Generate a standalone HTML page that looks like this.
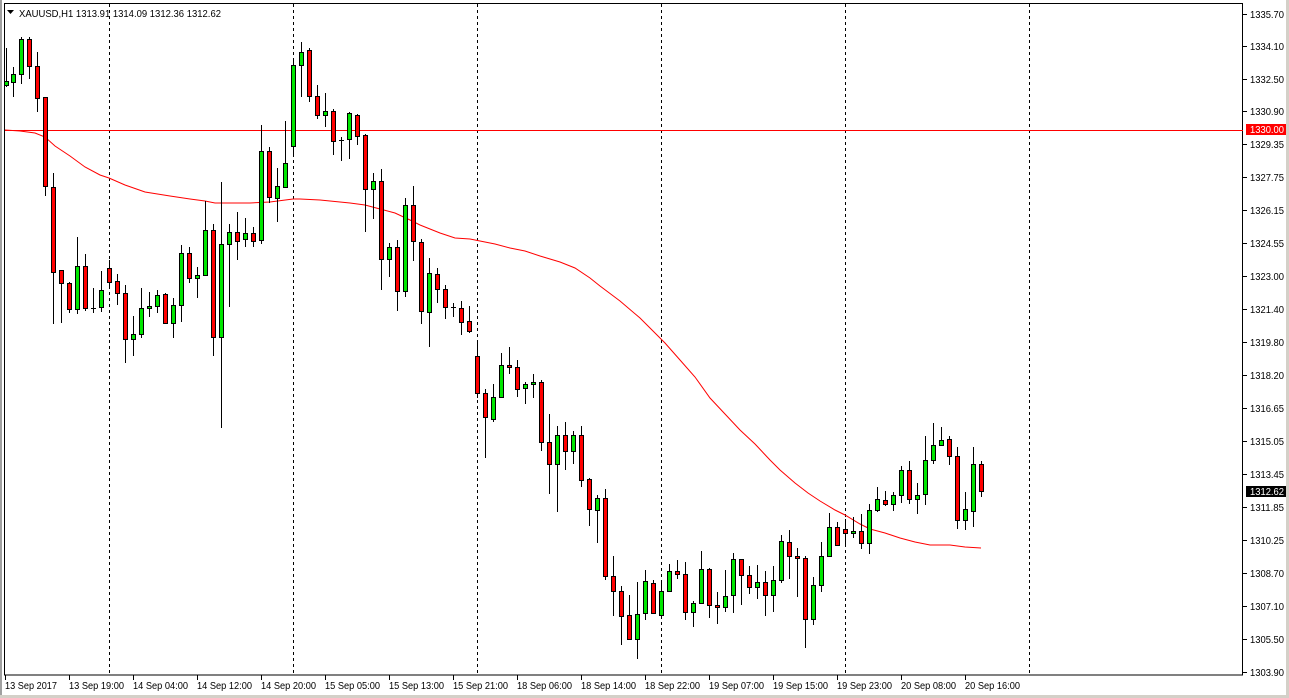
<!DOCTYPE html>
<html><head><meta charset="utf-8"><style>
html,body{margin:0;padding:0;background:#fff;}
body{width:1289px;height:698px;overflow:hidden;position:relative;font-family:"Liberation Sans",sans-serif;}
svg{position:absolute;left:0;top:0;}
.t{font-family:"Liberation Sans",sans-serif;font-size:10.5px;fill:#000;}
</style></head><body>
<svg width="1289" height="698" viewBox="0 0 1289 698" shape-rendering="crispEdges">
<rect x="0" y="0" width="1289" height="698" fill="#fff"/>
<rect x="0" y="0" width="2" height="698" fill="#a0a0a0"/>
<rect x="1286" y="0" width="3" height="698" fill="#d4d0c8"/>
<rect x="0" y="695" width="1289" height="3" fill="#d4d0c8"/>
<rect x="4.5" y="3.5" width="1238" height="671.5" fill="none" stroke="#000"/>
<g stroke="#000" stroke-dasharray="3,3">
<path d="M109.5 4V675M293.5 4V675M477.5 4V675M661.5 4V675M845.5 4V675M1029.5 4V675"/>
</g>
<path d="M5 130.5H1243" stroke="#ff0000"/>
<polyline shape-rendering="auto" fill="none" stroke="#ff0000" stroke-width="1" points="5,130 20,131 35,133 45,137 55,146 70,156 85,167 100,175 109,178 125,185 145,192 170,196 190,199 205,201 215,203 250,203 270,202 293,199 300,199 320,200 350,203 365,205 380,209 395,213 410,220 420,225 440,233 455,238 470,239 480,241 495,244 510,248 525,251 540,256 560,262 575,268 590,278 600,286 620,301 640,318 655,333 665,343 680,360 695,377 710,398 725,414 740,430 755,444 770,460 780,470 795,483 808,493 820,501 835,510 845,515 860,524 870,529 885,533 900,538 915,542 930,545 950,545 965,547 981,548"/>
<path stroke="#000" d="M6.5 48V87M13.5 67V97M21.5 37V84M29.5 37V79M37.5 52V112M45.5 97V196M53.5 173V324M61.5 270V323M69.5 282V313M77.5 237V314M85.5 254V311M93.5 288V313M101.5 271V312M109.5 260V288M117.5 274V305M125.5 285V363M133.5 316V356M141.5 288V338M149.5 292V317M157.5 290V313M165.5 293V324M173.5 298V338M181.5 245V322M189.5 247V283M197.5 267V298M205.5 201V275M213.5 224V356M221.5 182V428M229.5 224V307M237.5 212V260M245.5 218V247M253.5 227V247M261.5 125V244M269.5 147V203M277.5 168V222M285.5 121V187M293.5 58V157M301.5 42V97M309.5 48V102M317.5 85V119M325.5 93V127M333.5 109V155M341.5 137V161M349.5 112V159M357.5 114V145M365.5 134V232M373.5 173V219M381.5 169V290M389.5 243V277M397.5 240V311M405.5 198V297M413.5 186V261M421.5 239V324M429.5 258V347M437.5 268V303M445.5 285V319M453.5 303V317M461.5 301V335M469.5 306V333M477.5 340V398M485.5 389V458M493.5 384V422M501.5 353V398M509.5 347V374M517.5 360V397M525.5 382V404M533.5 374V398M541.5 380V451M549.5 414V494M557.5 426V512M565.5 422V470M573.5 431V464M581.5 426V487M589.5 478V526M597.5 495V543M605.5 489V580M613.5 556V616M621.5 586V645M629.5 595V639M637.5 582V659M645.5 570V620M653.5 580V613M661.5 580V617M669.5 564V591M677.5 560V579M685.5 562V620M693.5 601V627M701.5 551V604M709.5 568V618M717.5 592V624M725.5 570V612M733.5 553V613M741.5 559V605M749.5 566V594M757.5 565V599M765.5 571V616M773.5 566V612M781.5 535V583M789.5 530V579M797.5 548V597M805.5 556V648M813.5 577V625M821.5 542V592M829.5 513V556M837.5 522V545M845.5 519V546M853.5 517V538M861.5 514V549M869.5 504V554M877.5 487V512M885.5 491V506M893.5 492V511M901.5 466V503M909.5 461V504M917.5 483V514M925.5 436V505M933.5 423V464M941.5 427V445M949.5 436V465M957.5 447V529M965.5 492V530M973.5 447V527M981.5 461V497"/>
<g stroke="#000" stroke-width="1">
<g fill="#00e600">
<rect x="4.5" y="81.5" width="4" height="4"/>
<rect x="11.5" y="74.5" width="4" height="8"/>
<rect x="19.5" y="39.5" width="4" height="35"/>
<rect x="75.5" y="266.5" width="4" height="43"/>
<rect x="99.5" y="290.5" width="4" height="17"/>
<rect x="131.5" y="334.5" width="4" height="5"/>
<rect x="139.5" y="308.5" width="4" height="26"/>
<rect x="147.5" y="306.5" width="4" height="2"/>
<rect x="155.5" y="295.5" width="4" height="11"/>
<rect x="171.5" y="305.5" width="4" height="18"/>
<rect x="179.5" y="253.5" width="4" height="52"/>
<rect x="195.5" y="275.5" width="4" height="3"/>
<rect x="203.5" y="230.5" width="4" height="45"/>
<rect x="219.5" y="244.5" width="4" height="93"/>
<rect x="227.5" y="232.5" width="4" height="12"/>
<rect x="243.5" y="233.5" width="4" height="6"/>
<rect x="259.5" y="151.5" width="4" height="89"/>
<rect x="275.5" y="186.5" width="4" height="12"/>
<rect x="283.5" y="163.5" width="4" height="24"/>
<rect x="291.5" y="65.5" width="4" height="81"/>
<rect x="299.5" y="52.5" width="4" height="13"/>
<rect x="323.5" y="111.5" width="4" height="4"/>
<rect x="347.5" y="113.5" width="4" height="26"/>
<rect x="371.5" y="181.5" width="4" height="8"/>
<rect x="387.5" y="247.5" width="4" height="12"/>
<rect x="403.5" y="205.5" width="4" height="86"/>
<rect x="427.5" y="273.5" width="4" height="39"/>
<rect x="491.5" y="397.5" width="4" height="22"/>
<rect x="499.5" y="365.5" width="4" height="32"/>
<rect x="523.5" y="384.5" width="4" height="4"/>
<rect x="531.5" y="382.5" width="4" height="2"/>
<rect x="555.5" y="435.5" width="4" height="29"/>
<rect x="571.5" y="435.5" width="4" height="16"/>
<rect x="595.5" y="498.5" width="4" height="12"/>
<rect x="635.5" y="614.5" width="4" height="25"/>
<rect x="643.5" y="581.5" width="4" height="32"/>
<rect x="659.5" y="591.5" width="4" height="24"/>
<rect x="667.5" y="571.5" width="4" height="20"/>
<rect x="691.5" y="603.5" width="4" height="9"/>
<rect x="699.5" y="569.5" width="4" height="34"/>
<rect x="723.5" y="596.5" width="4" height="11"/>
<rect x="731.5" y="559.5" width="4" height="36"/>
<rect x="755.5" y="582.5" width="4" height="5"/>
<rect x="771.5" y="580.5" width="4" height="15"/>
<rect x="779.5" y="541.5" width="4" height="39"/>
<rect x="811.5" y="585.5" width="4" height="34"/>
<rect x="819.5" y="556.5" width="4" height="29"/>
<rect x="827.5" y="527.5" width="4" height="29"/>
<rect x="851.5" y="531.5" width="4" height="2"/>
<rect x="867.5" y="510.5" width="4" height="33"/>
<rect x="875.5" y="499.5" width="4" height="11"/>
<rect x="891.5" y="495.5" width="4" height="9"/>
<rect x="899.5" y="470.5" width="4" height="25"/>
<rect x="915.5" y="495.5" width="4" height="4"/>
<rect x="923.5" y="460.5" width="4" height="34"/>
<rect x="931.5" y="445.5" width="4" height="15"/>
<rect x="939.5" y="440.5" width="4" height="5"/>
<rect x="963.5" y="509.5" width="4" height="11"/>
<rect x="971.5" y="464.5" width="4" height="47"/>
</g>
<g fill="#ff0000">
<rect x="27.5" y="39.5" width="4" height="27"/>
<rect x="35.5" y="66.5" width="4" height="32"/>
<rect x="43.5" y="97.5" width="4" height="89"/>
<rect x="51.5" y="187.5" width="4" height="85"/>
<rect x="59.5" y="270.5" width="4" height="13"/>
<rect x="67.5" y="283.5" width="4" height="26"/>
<rect x="83.5" y="266.5" width="4" height="42"/>
<rect x="107.5" y="268.5" width="4" height="14"/>
<rect x="115.5" y="281.5" width="4" height="12"/>
<rect x="123.5" y="293.5" width="4" height="46"/>
<rect x="163.5" y="294.5" width="4" height="29"/>
<rect x="187.5" y="253.5" width="4" height="25"/>
<rect x="211.5" y="230.5" width="4" height="107"/>
<rect x="235.5" y="232.5" width="4" height="9"/>
<rect x="251.5" y="233.5" width="4" height="8"/>
<rect x="267.5" y="151.5" width="4" height="46"/>
<rect x="307.5" y="50.5" width="4" height="46"/>
<rect x="315.5" y="96.5" width="4" height="19"/>
<rect x="331.5" y="111.5" width="4" height="30"/>
<rect x="355.5" y="115.5" width="4" height="21"/>
<rect x="363.5" y="135.5" width="4" height="54"/>
<rect x="379.5" y="181.5" width="4" height="78"/>
<rect x="395.5" y="247.5" width="4" height="44"/>
<rect x="411.5" y="205.5" width="4" height="36"/>
<rect x="419.5" y="242.5" width="4" height="69"/>
<rect x="435.5" y="274.5" width="4" height="15"/>
<rect x="443.5" y="289.5" width="4" height="18"/>
<rect x="459.5" y="308.5" width="4" height="14"/>
<rect x="467.5" y="321.5" width="4" height="10"/>
<rect x="475.5" y="356.5" width="4" height="37"/>
<rect x="483.5" y="393.5" width="4" height="24"/>
<rect x="507.5" y="365.5" width="4" height="2"/>
<rect x="515.5" y="367.5" width="4" height="22"/>
<rect x="539.5" y="382.5" width="4" height="60"/>
<rect x="547.5" y="442.5" width="4" height="22"/>
<rect x="563.5" y="435.5" width="4" height="16"/>
<rect x="579.5" y="435.5" width="4" height="45"/>
<rect x="587.5" y="479.5" width="4" height="30"/>
<rect x="603.5" y="498.5" width="4" height="78"/>
<rect x="611.5" y="576.5" width="4" height="15"/>
<rect x="619.5" y="591.5" width="4" height="25"/>
<rect x="627.5" y="615.5" width="4" height="24"/>
<rect x="651.5" y="583.5" width="4" height="30"/>
<rect x="675.5" y="571.5" width="4" height="3"/>
<rect x="683.5" y="574.5" width="4" height="38"/>
<rect x="707.5" y="569.5" width="4" height="36"/>
<rect x="715.5" y="605.5" width="4" height="2"/>
<rect x="739.5" y="559.5" width="4" height="16"/>
<rect x="747.5" y="575.5" width="4" height="12"/>
<rect x="763.5" y="582.5" width="4" height="13"/>
<rect x="787.5" y="542.5" width="4" height="14"/>
<rect x="795.5" y="556.5" width="4" height="2"/>
<rect x="803.5" y="558.5" width="4" height="61"/>
<rect x="835.5" y="527.5" width="4" height="18"/>
<rect x="843.5" y="529.5" width="4" height="4"/>
<rect x="859.5" y="531.5" width="4" height="12"/>
<rect x="883.5" y="500.5" width="4" height="4"/>
<rect x="907.5" y="470.5" width="4" height="29"/>
<rect x="947.5" y="439.5" width="4" height="17"/>
<rect x="955.5" y="456.5" width="4" height="64"/>
<rect x="979.5" y="464.5" width="4" height="27"/>
</g>
</g>
<path stroke="#000" d="M91 308.5H96M339 140.5H344M451 307.5H456"/>
<path d="M7 10H14L10.5 14Z" fill="#000" shape-rendering="auto"/>
<text class="t" x="19" y="17" textLength="202" lengthAdjust="spacingAndGlyphs">XAUUSD,H1  1313.91 1314.09 1312.36 1312.62</text>
<path stroke="#000" d="M1243 14.5H1247M1243 46.5H1247M1243 79.5H1247M1243 111.5H1247M1243 144.5H1247M1243 177.5H1247M1243 210.5H1247M1243 243.5H1247M1243 276.5H1247M1243 309.5H1247M1243 342.5H1247M1243 375.5H1247M1243 408.5H1247M1243 441.5H1247M1243 474.5H1247M1243 507.5H1247M1243 540.5H1247M1243 573.5H1247M1243 606.5H1247M1243 639.5H1247M1243 672.5H1247"/>
<g>
<text class="t" x="1250" y="18" textLength="34" lengthAdjust="spacingAndGlyphs">1335.70</text>
<text class="t" x="1250" y="50" textLength="34" lengthAdjust="spacingAndGlyphs">1334.10</text>
<text class="t" x="1250" y="83" textLength="34" lengthAdjust="spacingAndGlyphs">1332.50</text>
<text class="t" x="1250" y="115" textLength="34" lengthAdjust="spacingAndGlyphs">1330.90</text>
<text class="t" x="1250" y="148" textLength="34" lengthAdjust="spacingAndGlyphs">1329.35</text>
<text class="t" x="1250" y="181" textLength="34" lengthAdjust="spacingAndGlyphs">1327.75</text>
<text class="t" x="1250" y="214" textLength="34" lengthAdjust="spacingAndGlyphs">1326.15</text>
<text class="t" x="1250" y="247" textLength="34" lengthAdjust="spacingAndGlyphs">1324.55</text>
<text class="t" x="1250" y="280" textLength="34" lengthAdjust="spacingAndGlyphs">1323.00</text>
<text class="t" x="1250" y="313" textLength="34" lengthAdjust="spacingAndGlyphs">1321.40</text>
<text class="t" x="1250" y="346" textLength="34" lengthAdjust="spacingAndGlyphs">1319.80</text>
<text class="t" x="1250" y="379" textLength="34" lengthAdjust="spacingAndGlyphs">1318.20</text>
<text class="t" x="1250" y="412" textLength="34" lengthAdjust="spacingAndGlyphs">1316.65</text>
<text class="t" x="1250" y="445" textLength="34" lengthAdjust="spacingAndGlyphs">1315.05</text>
<text class="t" x="1250" y="478" textLength="34" lengthAdjust="spacingAndGlyphs">1313.45</text>
<text class="t" x="1250" y="511" textLength="34" lengthAdjust="spacingAndGlyphs">1311.85</text>
<text class="t" x="1250" y="544" textLength="34" lengthAdjust="spacingAndGlyphs">1310.25</text>
<text class="t" x="1250" y="577" textLength="34" lengthAdjust="spacingAndGlyphs">1308.70</text>
<text class="t" x="1250" y="610" textLength="34" lengthAdjust="spacingAndGlyphs">1307.10</text>
<text class="t" x="1250" y="643" textLength="34" lengthAdjust="spacingAndGlyphs">1305.50</text>
<text class="t" x="1250" y="676" textLength="34" lengthAdjust="spacingAndGlyphs">1303.90</text>
</g>
<rect x="1246" y="124" width="40" height="11" fill="#ff0000"/>
<text x="1250" y="133" textLength="34" lengthAdjust="spacingAndGlyphs" style="font-family:'Liberation Sans',sans-serif;font-size:10.5px;fill:#fff">1330.00</text>
<rect x="1246" y="486" width="40" height="11" fill="#000"/>
<text x="1250" y="495" textLength="34" lengthAdjust="spacingAndGlyphs" style="font-family:'Liberation Sans',sans-serif;font-size:10.5px;fill:#fff">1312.62</text>
<path stroke="#000" d="M5.5 675V680M69.5 675V680M133.5 675V680M197.5 675V680M261.5 675V680M325.5 675V680M389.5 675V680M453.5 675V680M517.5 675V680M581.5 675V680M645.5 675V680M709.5 675V680M773.5 675V680M837.5 675V680M901.5 675V680M965.5 675V680"/>
<g>
<text class="t" x="5" y="689" textLength="52" lengthAdjust="spacingAndGlyphs">13 Sep 2017</text>
<text class="t" x="69" y="689" textLength="55" lengthAdjust="spacingAndGlyphs">13 Sep 19:00</text>
<text class="t" x="133" y="689" textLength="55" lengthAdjust="spacingAndGlyphs">14 Sep 04:00</text>
<text class="t" x="197" y="689" textLength="55" lengthAdjust="spacingAndGlyphs">14 Sep 12:00</text>
<text class="t" x="261" y="689" textLength="55" lengthAdjust="spacingAndGlyphs">14 Sep 20:00</text>
<text class="t" x="325" y="689" textLength="55" lengthAdjust="spacingAndGlyphs">15 Sep 05:00</text>
<text class="t" x="389" y="689" textLength="55" lengthAdjust="spacingAndGlyphs">15 Sep 13:00</text>
<text class="t" x="453" y="689" textLength="55" lengthAdjust="spacingAndGlyphs">15 Sep 21:00</text>
<text class="t" x="517" y="689" textLength="55" lengthAdjust="spacingAndGlyphs">18 Sep 06:00</text>
<text class="t" x="581" y="689" textLength="55" lengthAdjust="spacingAndGlyphs">18 Sep 14:00</text>
<text class="t" x="645" y="689" textLength="55" lengthAdjust="spacingAndGlyphs">18 Sep 22:00</text>
<text class="t" x="709" y="689" textLength="55" lengthAdjust="spacingAndGlyphs">19 Sep 07:00</text>
<text class="t" x="773" y="689" textLength="55" lengthAdjust="spacingAndGlyphs">19 Sep 15:00</text>
<text class="t" x="837" y="689" textLength="55" lengthAdjust="spacingAndGlyphs">19 Sep 23:00</text>
<text class="t" x="901" y="689" textLength="55" lengthAdjust="spacingAndGlyphs">20 Sep 08:00</text>
<text class="t" x="965" y="689" textLength="55" lengthAdjust="spacingAndGlyphs">20 Sep 16:00</text>
</g>
</svg>
</body></html>
